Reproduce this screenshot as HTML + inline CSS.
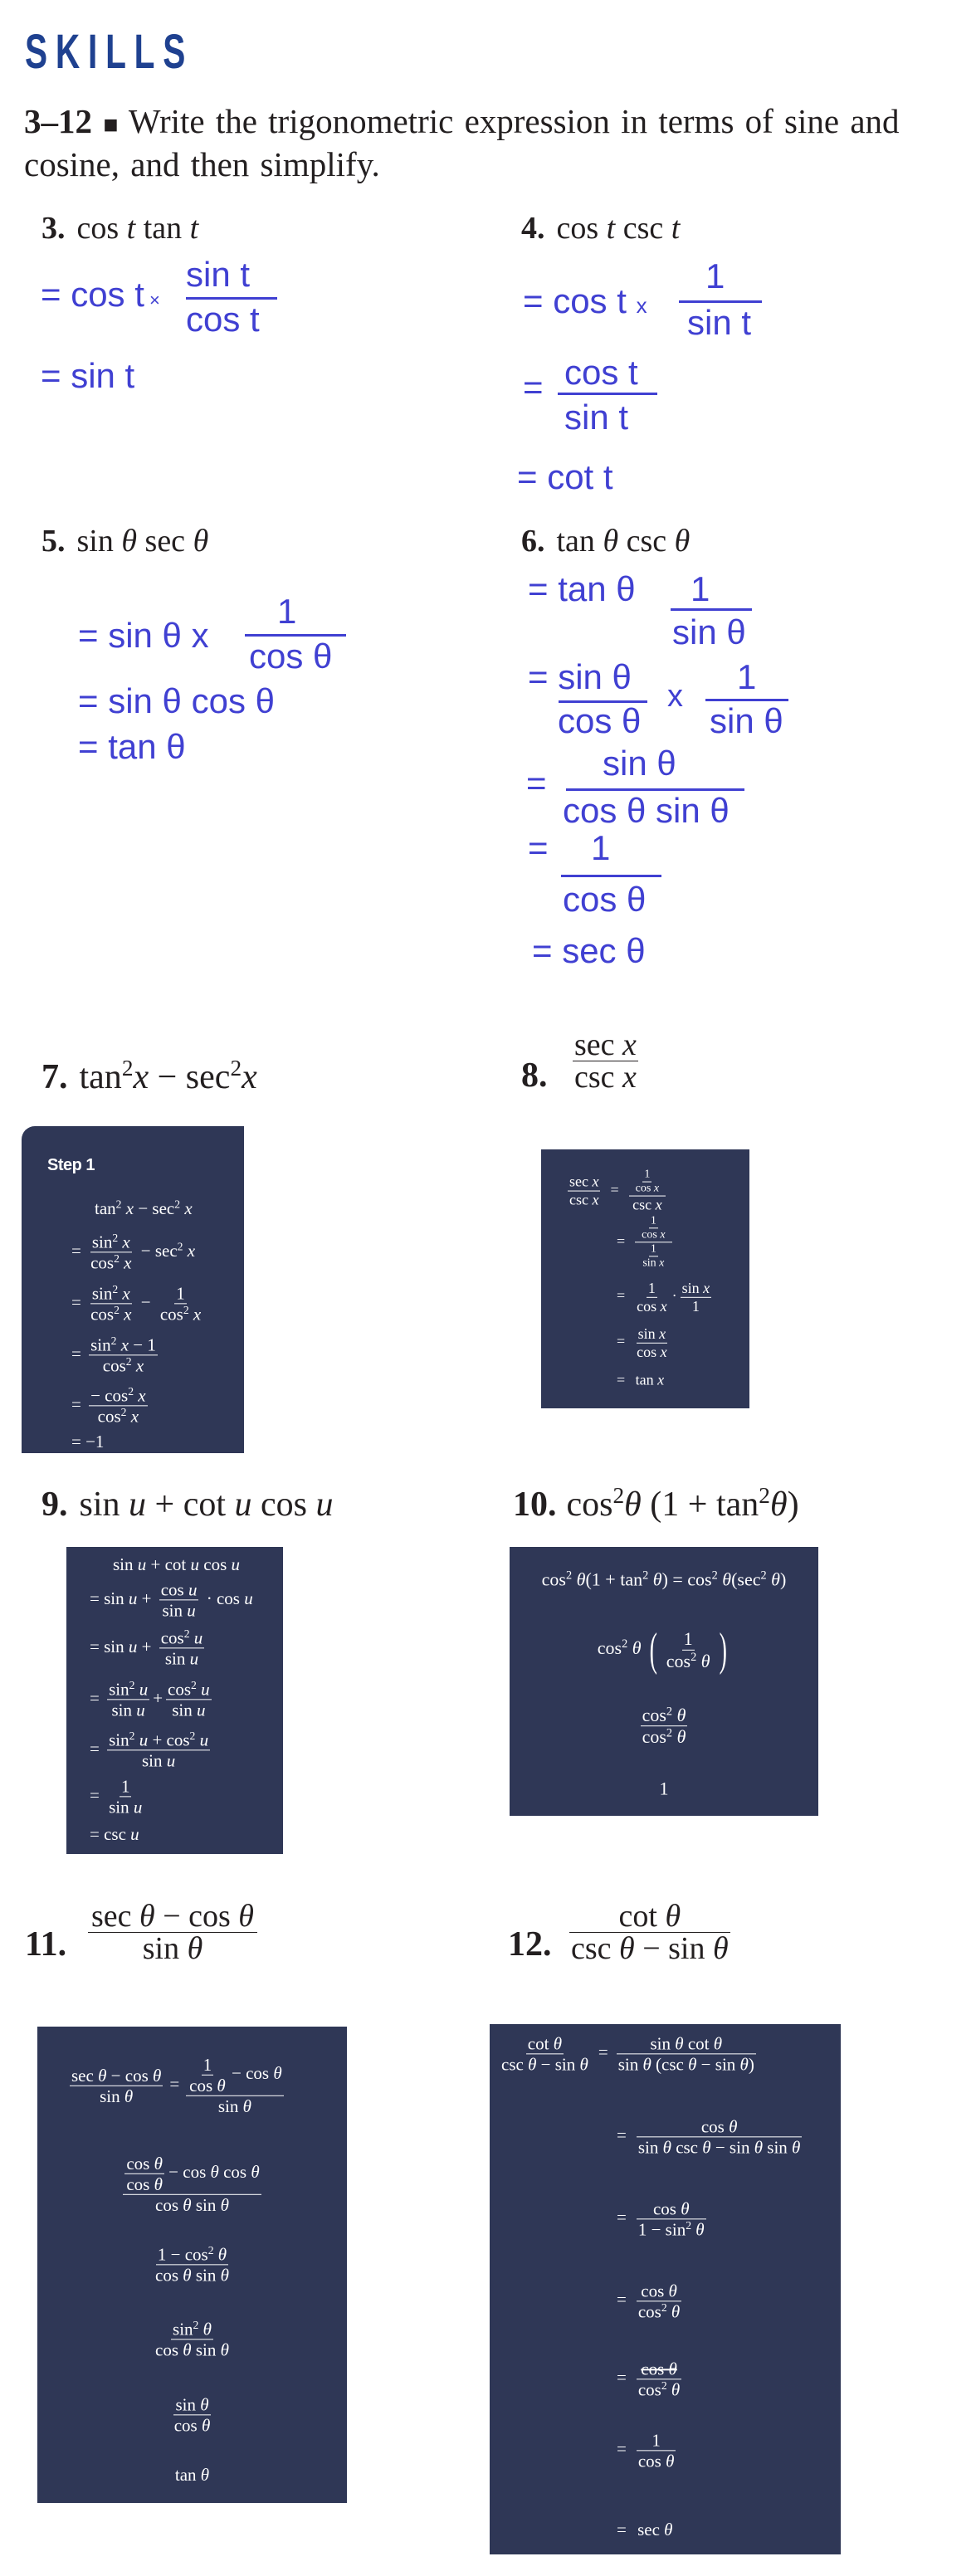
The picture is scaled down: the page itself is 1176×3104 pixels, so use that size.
<!DOCTYPE html>
<html><head><meta charset="utf-8"><style>
*{margin:0;padding:0;box-sizing:border-box}
body{width:1176px;height:3104px;background:#fff;position:relative;overflow:hidden;font-family:"Liberation Serif",serif;color:#231f20}
.a{position:absolute;white-space:nowrap;line-height:1}
.h{font-size:38px}
.h b{font-weight:bold;margin-right:14px}
.bl{font-family:"Liberation Sans",sans-serif;color:#4040d2;font-size:42px}
.ln{position:absolute;height:3px;background:#4040d2}
.box{position:absolute;background:#2f3756}
.m{position:absolute;white-space:nowrap;color:#fff;font-family:"Liberation Serif",serif;font-size:21px;display:block;transform:translateY(-50%);line-height:1.15}
.fr{display:inline-flex;flex-direction:column;align-items:center;vertical-align:middle;margin:0 4px}
.fr>span{padding:0 2px;display:block}
.fr>span:first-child{border-bottom:1.5px solid #fff}
.eq{margin:0 8px}
.s{font-size:14px}
sup{font-size:0.65em;vertical-align:0.55em;line-height:0}
.hf{display:inline-flex;flex-direction:column;align-items:center;vertical-align:middle}
.hf>span{display:block;padding:0 2px}
.hf>span:first-child{border-bottom:1.5px solid #231f20}
.c{text-align:center}
</style></head><body>

<div class="a" style="left:30px;top:34px;font-family:'Liberation Sans',sans-serif;font-weight:bold;font-size:58px;color:#1f4190;letter-spacing:14px;transform:scaleX(0.7);transform-origin:left">SKILLS</div>
<div class="a" style="left:29px;top:126px;font-size:41px;word-spacing:3px"><b>3–12</b> <span style="font-size:30px">■</span> Write the trigonometric expression in terms of sine and</div>
<div class="a" style="left:29px;top:178px;font-size:41px;word-spacing:3px">cosine, and then simplify.</div>

<!-- 3,4 -->
<div class="a h" style="left:50px;top:256px"><b>3.</b>cos <i>t</i> tan <i>t</i></div>
<div class="a h" style="left:628px;top:256px"><b>4.</b>cos <i>t</i> csc <i>t</i></div>
<div class="a bl" style="left:49px;top:334px">= cos t<span style="font-size:22px"> ×</span></div>
<div class="a bl" style="left:224px;top:310px">sin t</div>
<div class="ln" style="left:224px;top:358px;width:110px"></div>
<div class="a bl" style="left:224px;top:364px">cos t</div>
<div class="a bl" style="left:49px;top:432px">= sin t</div>

<div class="a bl" style="left:630px;top:342px">= cos t <span style="font-size:26px">x</span></div>
<div class="a bl" style="left:850px;top:312px">1</div>
<div class="ln" style="left:818px;top:362px;width:100px"></div>
<div class="a bl" style="left:828px;top:368px">sin t</div>
<div class="a bl" style="left:630px;top:446px">=</div>
<div class="a bl" style="left:680px;top:428px">cos t</div>
<div class="ln" style="left:672px;top:473px;width:120px"></div>
<div class="a bl" style="left:680px;top:482px">sin t</div>
<div class="a bl" style="left:623px;top:554px">= cot t</div>

<!-- 5,6 -->
<div class="a h" style="left:50px;top:633px"><b>5.</b>sin <i>θ</i> sec <i>θ</i></div>
<div class="a h" style="left:628px;top:633px"><b>6.</b>tan <i>θ</i> csc <i>θ</i></div>
<div class="a bl" style="left:94px;top:745px">= sin θ x</div>
<div class="a bl" style="left:334px;top:716px">1</div>
<div class="ln" style="left:295px;top:764px;width:122px"></div>
<div class="a bl" style="left:300px;top:770px">cos θ</div>
<div class="a bl" style="left:94px;top:824px">= sin θ cos θ</div>
<div class="a bl" style="left:94px;top:879px">= tan θ</div>

<div class="a bl" style="left:636px;top:689px">= tan θ</div>
<div class="a bl" style="left:832px;top:689px">1</div>
<div class="ln" style="left:808px;top:733px;width:98px"></div>
<div class="a bl" style="left:810px;top:741px">sin θ</div>
<div class="a bl" style="left:636px;top:795px">= sin θ</div>
<div class="ln" style="left:673px;top:844px;width:107px"></div>
<div class="a bl" style="left:672px;top:848px">cos θ</div>
<div class="a bl" style="left:804px;top:820px;font-size:38px">x</div>
<div class="a bl" style="left:888px;top:795px">1</div>
<div class="ln" style="left:850px;top:842px;width:100px"></div>
<div class="a bl" style="left:855px;top:848px">sin θ</div>
<div class="a bl" style="left:634px;top:923px">=</div>
<div class="a bl" style="left:726px;top:899px">sin θ</div>
<div class="ln" style="left:682px;top:950px;width:215px"></div>
<div class="a bl" style="left:678px;top:956px">cos θ sin θ</div>
<div class="a bl" style="left:636px;top:1001px">=</div>
<div class="a bl" style="left:712px;top:1001px">1</div>
<div class="ln" style="left:676px;top:1054px;width:121px"></div>
<div class="a bl" style="left:678px;top:1063px">cos θ</div>
<div class="a bl" style="left:641px;top:1125px">= sec θ</div>

<!-- 7,8 -->
<div class="a" style="left:50px;top:1277px;font-size:42px"><b style="margin-right:14px">7.</b>tan<sup>2</sup><i>x</i> − sec<sup>2</sup><i>x</i></div>
<div class="a" style="left:628px;top:1275px;font-size:42px"><b>8.</b></div>
<div class="a" style="left:690px;top:1240px;font-size:38px"><div class="hf"><span>sec <i>x</i></span><span>csc <i>x</i></span></div></div>

<div class="box" style="left:26px;top:1357px;width:268px;height:394px;border-top-left-radius:16px"></div>
<div class="a" style="left:57px;top:1394px;font-family:'Liberation Sans',sans-serif;font-weight:bold;font-size:20px;color:#fff;letter-spacing:-0.5px">Step 1</div>
<div class="m" style="left:114px;top:1456px">tan<sup>2</sup> <i>x</i> − sec<sup>2</sup> <i>x</i></div>
<div class="m" style="left:86px;top:1509px">= <span class="fr"><span>sin<sup>2</sup> <i>x</i></span><span>cos<sup>2</sup> <i>x</i></span></span> − sec<sup>2</sup> <i>x</i></div>
<div class="m" style="left:86px;top:1571px">= <span class="fr"><span>sin<sup>2</sup> <i>x</i></span><span>cos<sup>2</sup> <i>x</i></span></span> − <span class="fr"><span>1</span><span>cos<sup>2</sup> <i>x</i></span></span></div>
<div class="m" style="left:86px;top:1633px">= <span class="fr"><span>sin<sup>2</sup> <i>x</i> − 1</span><span>cos<sup>2</sup> <i>x</i></span></span></div>
<div class="m" style="left:86px;top:1694px">= <span class="fr"><span>− cos<sup>2</sup> <i>x</i></span><span>cos<sup>2</sup> <i>x</i></span></span></div>
<div class="m" style="left:86px;top:1737px">= −1</div>

<div class="box" style="left:652px;top:1385px;width:251px;height:312px"></div>
<div class="m" style="left:680px;top:1435px;font-size:18px"><span class="fr"><span>sec <i>x</i></span><span>csc <i>x</i></span></span><span class="eq">=</span><span class="fr"><span><span class="fr s"><span>1</span><span>cos <i>x</i></span></span></span><span>csc <i>x</i></span></span></div>
<div class="m" style="left:735px;top:1497px;font-size:18px"><span class="eq">=</span><span class="fr"><span><span class="fr s"><span>1</span><span>cos <i>x</i></span></span></span><span><span class="fr s"><span>1</span><span>sin <i>x</i></span></span></span></span></div>
<div class="m" style="left:735px;top:1563px;font-size:18px"><span class="eq">=</span><span class="fr"><span>1</span><span>cos <i>x</i></span></span>·<span class="fr"><span>sin <i>x</i></span><span>1</span></span></div>
<div class="m" style="left:735px;top:1618px;font-size:18px"><span class="eq">=</span><span class="fr"><span>sin <i>x</i></span><span>cos <i>x</i></span></span></div>
<div class="m" style="left:735px;top:1663px;font-size:18px"><span class="eq">=</span> tan <i>x</i></div>

<!-- 9,10 -->
<div class="a" style="left:50px;top:1792px;font-size:42px"><b style="margin-right:14px">9.</b>sin <i>u</i> + cot <i>u</i> cos <i>u</i></div>
<div class="a" style="left:618px;top:1792px;font-size:42px"><b style="margin-right:12px">10.</b>cos<sup>2</sup><i>θ</i> (1 + tan<sup>2</sup><i>θ</i>)</div>

<div class="box" style="left:80px;top:1864px;width:261px;height:370px"></div>
<div class="m" style="left:136px;top:1885px">sin <i>u</i> + cot <i>u</i> cos <i>u</i></div>
<div class="m" style="left:108px;top:1928px">= sin <i>u</i> + <span class="fr"><span>cos <i>u</i></span><span>sin <i>u</i></span></span> · cos <i>u</i></div>
<div class="m" style="left:108px;top:1986px">= sin <i>u</i> + <span class="fr"><span>cos<sup>2</sup> <i>u</i></span><span>sin <i>u</i></span></span></div>
<div class="m" style="left:108px;top:2048px">= <span class="fr"><span>sin<sup>2</sup> <i>u</i></span><span>sin <i>u</i></span></span>+<span class="fr"><span>cos<sup>2</sup> <i>u</i></span><span>sin <i>u</i></span></span></div>
<div class="m" style="left:108px;top:2109px">= <span class="fr"><span>sin<sup>2</sup> <i>u</i> + cos<sup>2</sup> <i>u</i></span><span>sin <i>u</i></span></span></div>
<div class="m" style="left:108px;top:2165px">= <span class="fr"><span>1</span><span>sin <i>u</i></span></span></div>
<div class="m" style="left:108px;top:2210px">= csc <i>u</i></div>

<div class="box" style="left:614px;top:1864px;width:372px;height:324px"></div>
<div class="m c" style="left:616px;width:368px;top:1903px;font-size:22px">cos<sup>2</sup> <i>θ</i>(1 + tan<sup>2</sup> <i>θ</i>) = cos<sup>2</sup> <i>θ</i>(sec<sup>2</sup> <i>θ</i>)</div>
<div class="m c" style="left:616px;width:368px;top:1988px;font-size:22px">cos<sup>2</sup> <i>θ</i> <span style="font-size:56px;vertical-align:middle;transform:scaleX(0.5);display:inline-block">(</span><span class="fr"><span>1</span><span>cos<sup>2</sup> <i>θ</i></span></span><span style="font-size:56px;vertical-align:middle;transform:scaleX(0.5);display:inline-block">)</span></div>
<div class="m c" style="left:616px;width:368px;top:2080px;font-size:22px"><span class="fr"><span>cos<sup>2</sup> <i>θ</i></span><span>cos<sup>2</sup> <i>θ</i></span></span></div>
<div class="m c" style="left:616px;width:368px;top:2155px;font-size:22px">1</div>

<!-- 11,12 -->
<div class="a" style="left:30px;top:2322px;font-size:42px"><b>11.</b></div>
<div class="a" style="left:106px;top:2290px;font-size:38px"><div class="hf"><span style="padding:0 4px">sec <i>θ</i> − cos <i>θ</i></span><span>sin <i>θ</i></span></div></div>
<div class="a" style="left:612px;top:2322px;font-size:42px"><b>12.</b></div>
<div class="a" style="left:686px;top:2290px;font-size:38px"><div class="hf"><span style="align-self:stretch;text-align:center">cot <i>θ</i></span><span>csc <i>θ</i> − sin <i>θ</i></span></div></div>

<div class="box" style="left:45px;top:2442px;width:373px;height:574px"></div>
<div class="m" style="left:80px;top:2513px;font-size:21px"><span class="fr"><span>sec <i>θ</i> − cos <i>θ</i></span><span>sin <i>θ</i></span></span><span class="eq" style="margin:0 4px">=</span><span class="fr"><span style="display:block"><span class="fr" style="margin:0"><span>1</span><span>cos <i>θ</i></span></span> − cos <i>θ</i></span><span>sin <i>θ</i></span></span></div>
<div class="m c" style="left:45px;width:373px;top:2632px;font-size:21px"><span class="fr"><span style="display:block"><span class="fr" style="margin:0"><span>cos <i>θ</i></span><span>cos <i>θ</i></span></span> − cos <i>θ</i> cos <i>θ</i></span><span>cos <i>θ</i> sin <i>θ</i></span></span></div>
<div class="m c" style="left:45px;width:373px;top:2729px;font-size:21px"><span class="fr"><span>1 − cos<sup>2</sup> <i>θ</i></span><span>cos <i>θ</i> sin <i>θ</i></span></span></div>
<div class="m c" style="left:45px;width:373px;top:2819px;font-size:21px"><span class="fr"><span>sin<sup>2</sup> <i>θ</i></span><span>cos <i>θ</i> sin <i>θ</i></span></span></div>
<div class="m c" style="left:45px;width:373px;top:2910px;font-size:21px"><span class="fr"><span>sin <i>θ</i></span><span>cos <i>θ</i></span></span></div>
<div class="m c" style="left:45px;width:373px;top:2982px;font-size:21px">tan <i>θ</i></div>

<div class="box" style="left:590px;top:2439px;width:423px;height:639px"></div>
<div class="m" style="left:598px;top:2475px;font-size:21px"><span class="fr"><span>cot <i>θ</i></span><span>csc <i>θ</i> − sin <i>θ</i></span></span><span class="eq" style="margin:0 6px">=</span><span class="fr"><span style="align-self:stretch;text-align:center">sin <i>θ</i> cot <i>θ</i></span><span>sin <i>θ</i> (csc <i>θ</i> − sin <i>θ</i>)</span></span></div>
<div class="m" style="left:735px;top:2575px;font-size:21px"><span class="eq">=</span><span class="fr"><span style="align-self:stretch;text-align:center">cos <i>θ</i></span><span>sin <i>θ</i> csc <i>θ</i> − sin <i>θ</i> sin <i>θ</i></span></span></div>
<div class="m" style="left:735px;top:2674px;font-size:21px"><span class="eq">=</span><span class="fr"><span style="align-self:stretch;text-align:center">cos <i>θ</i></span><span>1 − sin<sup>2</sup> <i>θ</i></span></span></div>
<div class="m" style="left:735px;top:2773px;font-size:21px"><span class="eq">=</span><span class="fr"><span style="align-self:stretch;text-align:center">cos <i>θ</i></span><span>cos<sup>2</sup> <i>θ</i></span></span></div>
<div class="m" style="left:735px;top:2867px;font-size:21px"><span class="eq">=</span><span class="fr"><span style="align-self:stretch;text-align:center;text-decoration:line-through">cos <i>θ</i></span><span>cos<sup>2</sup> <i>θ</i></span></span></div>
<div class="m" style="left:735px;top:2953px;font-size:21px"><span class="eq">=</span><span class="fr"><span style="align-self:stretch;text-align:center">1</span><span>cos <i>θ</i></span></span></div>
<div class="m" style="left:735px;top:3048px;font-size:21px"><span class="eq">=</span> sec <i>θ</i></div>

</body></html>
